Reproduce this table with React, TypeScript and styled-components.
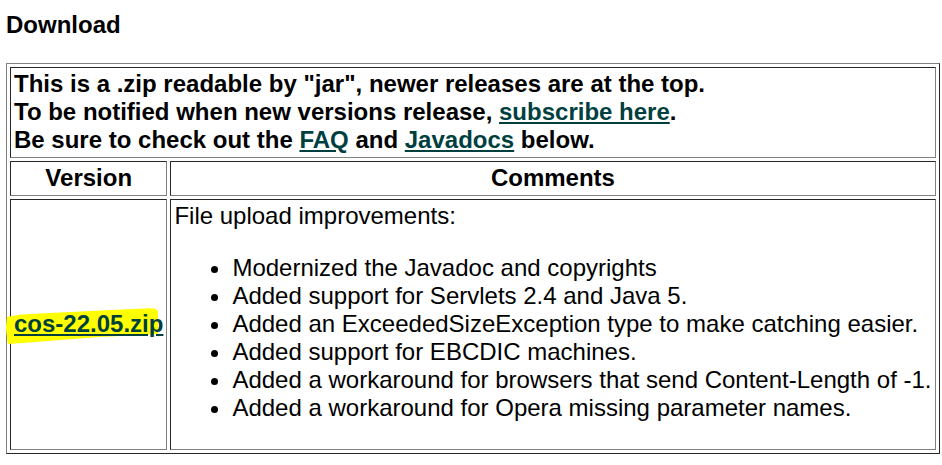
import styled, { createGlobalStyle } from "styled-components"

type CellProps = {
  $bold?: boolean,
  $center?: boolean,
  $valign?: string
}

const GlobalStyle = createGlobalStyle`
  body {
    margin: 0;
    background: #fff;
    color: #000;
    font-family: "Liberation Sans", Arial, sans-serif;
    font-size: 24px;
    line-height: 28px;
  }
`

const Page = styled.div`
  padding: 11px 0 0 6px;
`

const Heading = styled.h2`
  margin: 0 0 24px;
  font-size: 24px;
  line-height: 28px;
  font-weight: bold;
`

const Table = styled.table`
  border-collapse: separate;
  border-spacing: 3px;
  border: 1px solid;
  border-color: #808080 #262626 #262626 #808080;
  font-size: 24px;
  line-height: 28px;
`

const Cell = styled.td<CellProps>`
  padding: 2px 3px 3px;
  border: 1px solid;
  border-color: #262626 #808080 #808080 #262626;
  font-weight: ${({$bold}) => $bold ? "bold" : "normal"};
  text-align: ${({$center}) => $center ? "center" : "left"};
  vertical-align: ${({$valign}) => $valign || "middle"};
  white-space: nowrap;
`

const Link = styled.a`
  color: #003f3f;
  text-decoration: underline;
  font-weight: bold;
`

const List = styled.ul`
  margin: 24px 0;
  padding-left: 58px;
  list-style: disc;
`

const Marked = styled.span`
  position: relative;
  display: inline-block;
`

// yellow highlighter stroke drawn over the page by hand
const Marker = styled.svg`
  position: absolute;
  left: -8px;
  top: -3px;
  width: 154px;
  height: 38px;
  overflow: visible;
`

const ZipLink = styled(Link)`
  position: relative;
`

const changes = [
  "Modernized the Javadoc and copyrights",
  "Added support for Servlets 2.4 and Java 5.",
  "Added an ExceededSizeException type to make catching easier.",
  "Added support for EBCDIC machines.",
  "Added a workaround for browsers that send Content-Length of -1.",
  "Added a workaround for Opera missing parameter names.",
]

const App = () => {
  return (
    <Page>
      <GlobalStyle />
      <Heading>Download</Heading>
      <Table>
        <tbody>
          <tr>
            <Cell colSpan={2} $bold>
              This is a .zip readable by "jar", newer releases are at the top.<br />
              To be notified when new versions release, <Link href="#">subscribe here</Link>.<br />
              Be sure to check out the <Link href="#">FAQ</Link> and <Link href="#">Javadocs</Link> below.
            </Cell>
          </tr>
          <tr>
            <Cell as="th" $bold $center>Version</Cell>
            <Cell as="th" $bold $center>Comments</Cell>
          </tr>
          <tr>
            <Cell $bold>
              <Marked>
                <Marker viewBox="0 0 154 38" aria-hidden="true">
                  <path
                    d="M1 10 C10 8 18 7 24 7 L64 5 L104 3 L139 1.5 C145 1 150 1 152 4 L152 27 C140 27.5 130 28 124 28.5 L94 30 L54 33 L24 35.5 L2 37 C1 34 1 31 1 29 C0 25 0 22 0 19 Z"
                    fill="#ffff00"
                  />
                </Marker>
                <ZipLink href="#">cos-22.05.zip</ZipLink>
              </Marked>
            </Cell>
            <Cell $valign="top">
              File upload improvements:
              <List>
                {changes.map(item => <li key={item}>{item}</li>)}
              </List>
            </Cell>
          </tr>
        </tbody>
      </Table>
    </Page>
  )
}

export default App
